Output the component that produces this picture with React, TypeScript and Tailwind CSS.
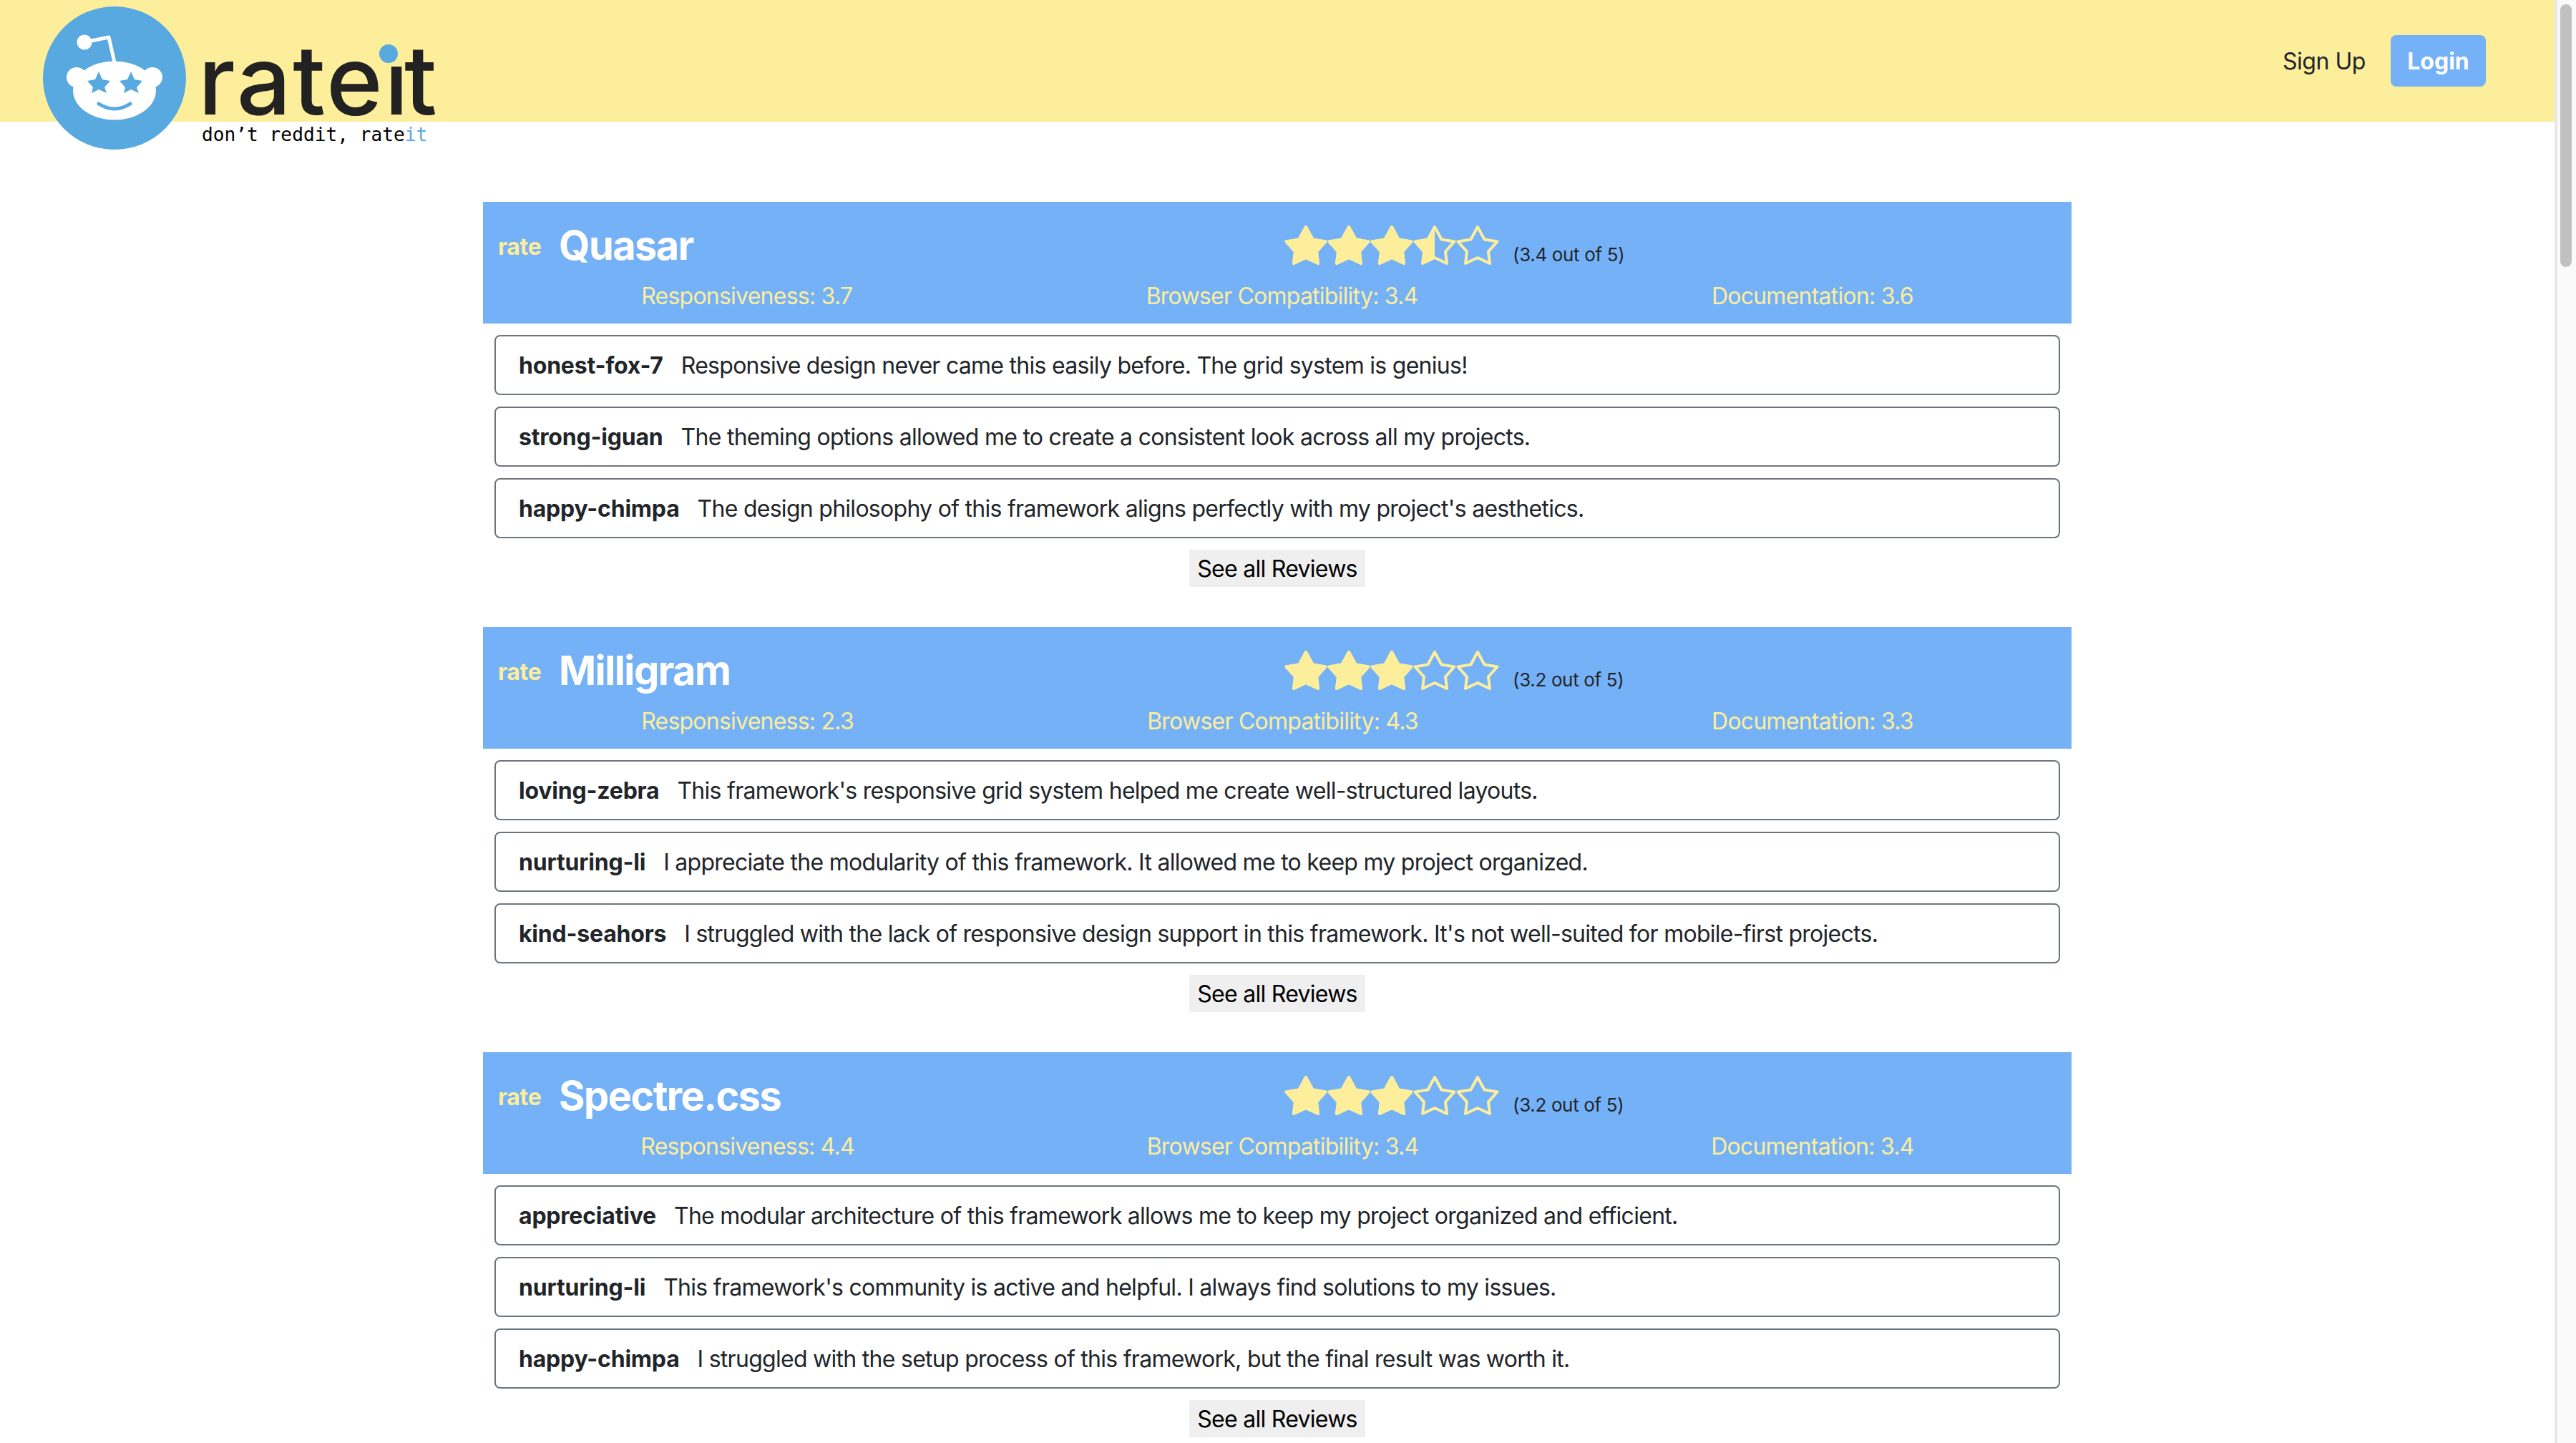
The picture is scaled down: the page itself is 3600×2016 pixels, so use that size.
import React from 'react';

const STAR_POINTS = '30,4 39.5,21.5 57.5,24.5 45,38.5 47,55 30,47 13,55 15,38.5 2.5,24.5 20.5,21.5';

function Star({ fill }: { fill: 'full' | 'half' | 'empty' }) {
  return (
    <svg width="60" height="60" viewBox="0 0 60 60" className="block shrink-0">
      <polygon points={STAR_POINTS} fill="none" stroke="#FDEE9B" strokeWidth="4" strokeLinejoin="round" />
      {fill === 'full' && <polygon points={STAR_POINTS} fill="#FDEE9B" stroke="#FDEE9B" strokeWidth="4" strokeLinejoin="round" />}
      {fill === 'half' && (
        <>
          <clipPath id="half-star">
            <rect x="0" y="0" width="30" height="60" />
          </clipPath>
          <polygon points={STAR_POINTS} fill="#FDEE9B" clipPath="url(#half-star)" />
        </>
      )}
    </svg>
  );
}

function Logo() {
  return (
    <div className="flex items-start shrink-0">
      <svg width="200" height="200" viewBox="0 0 200 200" className="block shrink-0">
        <circle cx="100" cy="100" r="100" fill="#58A9DF" />
        {/* antenna */}
        <path d="M100 78 L92 43 L58 50" fill="none" stroke="#fff" strokeWidth="5" strokeLinejoin="round" />
        <circle cx="58" cy="50" r="10.5" fill="#fff" />
        {/* head and ears */}
        <ellipse cx="100" cy="117.5" rx="58" ry="41" fill="#fff" />
        <circle cx="47" cy="99" r="14" fill="#fff" />
        <circle cx="153" cy="99" r="14" fill="#fff" />
        {/* star eyes */}
        <polygon points="78,91 83,102 94,104 86,113 89,121 78,116 68,121 70,113 62,104 73,102" fill="#58A9DF" />
        <polygon points="123,91 128,102 139,104 131,113 134,121 123,116 113,121 115,113 107,104 118,102" fill="#58A9DF" />
        {/* smile */}
        <path d="M78 136 Q100 150 122 136" fill="none" stroke="#58A9DF" strokeWidth="5" strokeLinecap="round" />
      </svg>
      <div className="ml-[17px] flex flex-col">
        <div className="relative h-[163px] whitespace-nowrap pt-[41px] font-['Inter',sans-serif] text-[134px] leading-[122px] font-medium text-[#222222]">
          <span className="tracking-[2.5px]">rate</span>
          {/* the i's own dot is cut off, the blue dot takes its place */}
          <span className="inline-block tracking-[-6px] [clip-path:inset(43px_-20px_0_-20px)]">i</span>t
          <span className="absolute left-[253px] top-[53px] h-[26px] w-[26px] rounded-full bg-[#58A9DF]" />
        </div>
        <div className="ml-[5px] h-[32px] font-['DejaVu_Sans_Mono',monospace] text-[26.2px] leading-[32px] text-black">
          don’t reddit, rate<span className="text-[#58A9DF]">it</span>
        </div>
      </div>
    </div>
  );
}

type Review = { user: string; text: string };

type Framework = {
  name: string;
  rating: string;
  stars: ('full' | 'half' | 'empty')[];
  responsiveness: string;
  compatibility: string;
  documentation: string;
  reviews: Review[];
};

const frameworks: Framework[] = [
  {
    name: 'Quasar',
    rating: '3.4',
    stars: ['full', 'full', 'full', 'half', 'empty'],
    responsiveness: '3.7',
    compatibility: '3.4',
    documentation: '3.6',
    reviews: [
      { user: 'honest-fox-7', text: 'Responsive design never came this easily before. The grid system is genius!' },
      { user: 'strong-iguan', text: 'The theming options allowed me to create a consistent look across all my projects.' },
      { user: 'happy-chimpa', text: "The design philosophy of this framework aligns perfectly with my project's aesthetics." },
    ],
  },
  {
    name: 'Milligram',
    rating: '3.2',
    stars: ['full', 'full', 'full', 'empty', 'empty'],
    responsiveness: '2.3',
    compatibility: '4.3',
    documentation: '3.3',
    reviews: [
      { user: 'loving-zebra', text: "This framework's responsive grid system helped me create well-structured layouts." },
      { user: 'nurturing-li', text: 'I appreciate the modularity of this framework. It allowed me to keep my project organized.' },
      { user: 'kind-seahors', text: "I struggled with the lack of responsive design support in this framework. It's not well-suited for mobile-first projects." },
    ],
  },
  {
    name: 'Spectre.css',
    rating: '3.2',
    stars: ['full', 'full', 'full', 'empty', 'empty'],
    responsiveness: '4.4',
    compatibility: '3.4',
    documentation: '3.4',
    reviews: [
      { user: 'appreciative', text: 'The modular architecture of this framework allows me to keep my project organized and efficient.' },
      { user: 'nurturing-li', text: "This framework's community is active and helpful. I always find solutions to my issues." },
      { user: 'happy-chimpa', text: 'I struggled with the setup process of this framework, but the final result was worth it.' },
    ],
  },
];

function FrameworkCard({ fw }: { fw: Framework }) {
  return (
    <section className="mb-[56px]">
      <div className="bg-[#75B1F7] px-4 pb-[14px] pt-4">
        <div className="flex h-[90px] items-center">
          <div className="flex w-[1104px] items-center pl-[5px]">
            <span className="mt-[4px] w-[85px] text-[32px] leading-[48px] font-bold tracking-[-0.3px] text-[#FDEE9B]">rate</span>
            <h3 className="text-[56px] leading-[67px] font-bold tracking-[-1.6px] text-white">{fw.name}</h3>
          </div>
          <div className="flex">
            {fw.stars.map((s, i) => (
              <Star key={i} fill={s} />
            ))}
          </div>
          <span className="ml-[19px] mt-[26px] text-[26px] leading-[36px] tracking-[-0.35px] text-[#212529]">({fw.rating} out of 5)</span>
        </div>
        <div className="flex justify-around pt-[2px] text-[32px] leading-[48px] tracking-[-0.76px] text-[#FDEE9B]">
          <span>Responsiveness: {fw.responsiveness}</span>
          <span>Browser Compatibility: {fw.compatibility}</span>
          <span>Documentation: {fw.documentation}</span>
        </div>
      </div>
      <div className="mt-4 flex flex-col gap-4 px-4">
        {fw.reviews.map((r) => (
          <div key={r.user} className="flex gap-[25px] rounded-lg border-2 border-[#6C757D] px-8 pb-[15px] pt-[17px] text-[32px] leading-[48px] text-[#212529]">
            <b className="font-bold tracking-[-0.2px]">{r.user}</b>
            <span className="tracking-[-0.72px]">{r.text}</span>
          </div>
        ))}
      </div>
      <div className="mt-4 flex justify-center">
        <button className="h-[52px] w-[246px] bg-[#EFEFEF] pt-[2px] text-[32px] leading-[48px] tracking-[-0.72px] text-black">See all Reviews</button>
      </div>
    </section>
  );
}

function App() {
  return (
    <div className="flex h-[2016px] overflow-hidden bg-white font-['Inter',sans-serif] text-[#212529]">
      <div className="w-[3570px] shrink-0">
        <header className="relative z-10 flex h-[170px] items-start justify-between bg-[#FDEE9B] pl-[60px] pr-[96px] pt-[9px]">
          <Logo />
          <nav className="mt-[40px] flex items-center gap-[35px]">
            <a className="pt-[2px] text-[32px] leading-[48px] tracking-[-0.45px] text-[#212529]">Sign Up</a>
            <button className="h-[72px] w-[133px] rounded-lg bg-[#75B1F7] pt-[1px] text-[32px] font-bold text-white">Login</button>
          </nav>
        </header>
        <main className="mx-auto mt-[112px] w-[2220px]">
          {frameworks.map((fw) => (
            <FrameworkCard key={fw.name} fw={fw} />
          ))}
        </main>
      </div>
      {/* scrollbar */}
      <div className="w-[30px] shrink-0 border-l-4 border-[#E8E8E8] bg-[#FAFAFA] pl-1 pt-[6px]">
        <div className="h-[367px] w-4 rounded-lg bg-[#C1C1C1]" />
      </div>
    </div>
  );
}

export default App;
